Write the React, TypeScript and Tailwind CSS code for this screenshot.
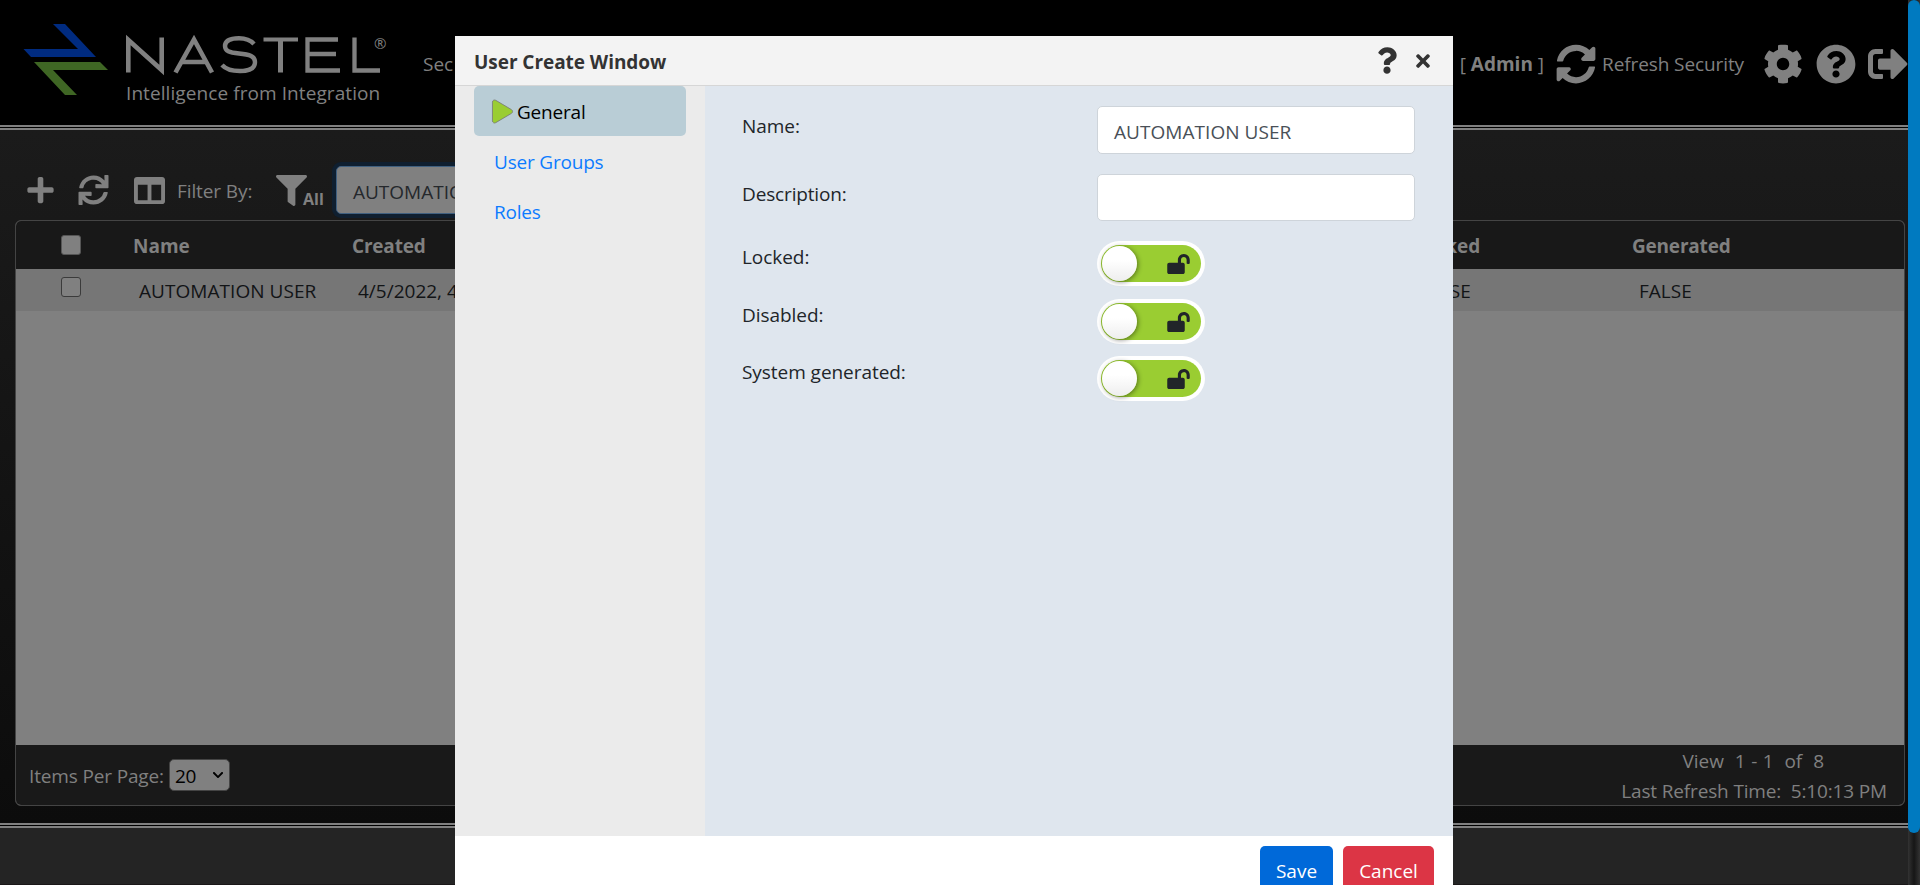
import React from "react";
import {
  FaPlus, FaSync, FaSyncAlt, FaColumns, FaFilter, FaCog, FaQuestionCircle,
  FaSignOutAlt, FaQuestion, FaTimes, FaPlay, FaLockOpen, FaChevronDown,
} from "react-icons/fa";

function Logo() {
  return (
    <svg className="block h-[80px] w-[380px]" viewBox="0 20 380 80">
      <path d="M53 24H65L96 57H31L23.500 49H78Z" fill="#002b80" />
      <path d="M34 62H100L108 70H53L77 95H65Z" fill="#3f6624" />
      <g fill="none" stroke="#808080">
        <path d="M128.300 72.500V40L161.700 70V37.500" strokeWidth="4.600" />
        <path d="M175.500 72.500L194 39.500L212 72.500M182 62H206" strokeWidth="4.600" />
        <path d="M254 44C250 39.500 245 38.200 239 38.200C230 38.200 225 41 225 46C225 51 229 52.500 239 53.500C250 54.500 255 56.500 255 62C255 68 250 71 240 71C231 71 226 69.500 222 65" strokeWidth="4.400" />
        <path d="M263.500 39.500H298" strokeWidth="4" />
        <path d="M280.500 39.500V72.500" strokeWidth="5" />
        <path d="M338 39.500H307.500V70.500H340M307.500 54H336" strokeWidth="4.300" />
        <path d="M354.500 37.500V70.500H380" strokeWidth="4.300" />
      </g>
    </svg>
  );
}

function Toggle() {
  return (
    <div className="flex h-[45px] w-[108px] rounded-full bg-white p-1">
      <div className="flex flex-1 items-center justify-between rounded-full bg-[#9acd32] pr-[11px]">
        <div className="ml-px h-[35px] w-[35px] rounded-full bg-linear-to-b from-white from-40% to-[#eeeeee] shadow-[1px_1px_5px_rgba(0,0,0,0.45)]" />
        <FaLockOpen className="h-5 w-[23px] text-[#212529]" />
      </div>
    </div>
  );
}

function Dialog() {
  return (
    <div className="absolute left-[455px] top-9 flex h-[849px] w-[998px] flex-col overflow-hidden bg-white">
      <div className="flex h-[50px] shrink-0 items-center justify-between border-b border-[#d6d6d6] bg-[#f3f3f3] pl-[19px] pr-[22px]">
        <h1 className="pt-[3px] text-[19px] font-bold tracking-[-0.05px] text-[#333]">User Create Window</h1>
        <div className="flex items-center gap-[18px] text-[#333]">
          <FaQuestion className="h-[27px] w-[20px]" />
          <FaTimes className="h-[20px] w-[16px]" />
        </div>
      </div>
      <div className="flex h-[750px] shrink-0">
        <nav className="w-[250px] bg-[#ebebeb] pl-[19px] tracking-[-0.2px] text-[#0d7bff]">
          <div className="flex h-[50px] w-[212px] items-center rounded-[5px] bg-[#b9cdd6] pl-[18px] text-black">
            <FaPlay className="mr-1 h-[23px] w-[21px] overflow-visible fill-[#9acd32] stroke-[#777] stroke-[18]" />
            <span className="pt-[2px]">General</span>
          </div>
          <div className="flex h-[50px] items-center pl-5 pt-[2px]">User Groups</div>
          <div className="flex h-[50px] items-center pl-5 pt-[2px]">Roles</div>
        </nav>
        <div className="flex-1 bg-[#dfe6ee] pl-[37px] pr-[38px] pt-5 tracking-[-0.05px] text-[#212529]">
          <div className="flex h-[68px] justify-between">
            <label className="pt-[5px]">Name:</label>
            <div className="flex h-12 w-[318px] items-center rounded-[5px] border border-[#ced4da] bg-white px-4 pt-1 tracking-[0.05px] text-[#495057]">AUTOMATION USER</div>
          </div>
          <div className="flex h-[67px] justify-between">
            <label className="pt-[5px] tracking-[-0.15px]">Description:</label>
            <div className="h-[47px] w-[318px] rounded-[5px] border border-[#ced4da] bg-white" />
          </div>
          {[["Locked:", "h-[58px]"], ["Disabled:", "h-[57px]"], ["System generated:", "h-[57px]"]].map(([t, h]) => (
            <div key={t} className={`flex ${h}`}>
              <label className="w-[355px] pt-px">{t}</label>
              <Toggle />
            </div>
          ))}
        </div>
      </div>
      <div className="flex justify-end gap-[10px] pr-[19px] pt-[10px] text-white">
        <div className="flex h-[50px] w-[73px] items-center justify-center rounded-[5px] bg-[#0069d9]">Save</div>
        <div className="flex h-[50px] w-[91px] items-center justify-center rounded-[5px] bg-[#dc3545]">Cancel</div>
      </div>
    </div>
  );
}

export default function App() {
  return (
    <div className="relative flex h-[885px] w-[1920px] overflow-hidden whitespace-nowrap bg-black font-['Open_Sans',sans-serif] text-[19px] leading-[30px] text-[#808080]">
      <div className="flex w-[1908px] flex-col">
        <header className="flex h-[125px] shrink-0 justify-between bg-black">
          <div className="flex">
            <div className="w-[423px] pt-5">
              <div className="relative">
                <Logo />
                <div className="absolute left-[374px] top-[14px] text-[15px] leading-[18px]">®</div>
                <div className="absolute left-[126px] top-[58px] text-[19px] leading-[30px] tracking-[0.08px]">Intelligence from Integration</div>
              </div>
            </div>
            <div className="pt-[49px]">Sec</div>
          </div>
          <div className="flex h-[127px] items-center">
            <span className="mr-3">[ <b>Admin</b> ]</span>
            <FaSyncAlt className="mr-[6px] h-10 w-10" />
            <span className="mr-[19px] tracking-[-0.1px]">Refresh Security</span>
            <FaCog className="mr-[13px] h-10 w-10" />
            <FaQuestionCircle className="mr-3 h-10 w-10" />
            <FaSignOutAlt className="h-10 w-10" />
          </div>
        </header>
        <div className="h-[5px] shrink-0 border-y-2 border-[#808080] bg-black" />
        <main className="h-[693px] shrink-0 bg-linear-to-b from-[#1b1b1b] to-[#0c0c0c] pl-[15px] pr-[3px]">
          <div className="flex h-[90px] items-center pl-3 pt-[30px]">
            <FaPlus className="mr-6 h-[30px] w-[27px]" />
            <FaSync className="mr-[25px] h-[30px] w-[31px]" />
            <FaColumns className="mr-3 h-[31px] w-[31px]" />
            <span className="w-[99px] pt-[2px] tracking-[-0.1px]">Filter By:</span>
            <FaFilter className="h-[31px] w-[31px]" />
            <b className="-ml-1 mt-[18px] w-[33px] text-[16px]">All</b>
            <div className="flex h-12 w-[318px] items-center rounded-[5px] border border-[#406080] bg-[#808080] px-4 pt-1 text-[#25282c] shadow-[0_0_0_4px_#0f1f30]">AUTOMATIO</div>
          </div>
          <section className="flex h-[586px] flex-col overflow-hidden rounded-[6px] border border-[#444] bg-[#808080]">
            <div className="flex h-12 items-center bg-[#181818] font-bold">
              <div className="w-[117px] pl-[45px]"><div className="h-5 w-5 rounded-[3px] border border-[#555] bg-[#808080]" /></div>
              <div className="w-[219px] pt-[2px]">Name</div>
              <div className="w-[1061px] pt-[2px] tracking-[-0.2px]">Created</div>
              <div className="w-[219px] pt-[2px]">Locked</div>
              <div className="pt-[2px] tracking-[-0.2px]">Generated</div>
            </div>
            <div className="flex h-[42px] items-center bg-[#767676] text-[#121416]">
              <div className="w-[123px] pb-[6px] pl-[45px]"><div className="h-5 w-5 rounded-[3px] border-[1.5px] border-[#3b3b3b] bg-[#808080]" /></div>
              <div className="w-[219px] pt-[2px] tracking-[0.05px]">AUTOMATION USER</div>
              <div className="w-[1060px] pt-[2px]">4/5/2022, 4</div>
              <div className="w-[221px] pt-[2px]">FALSE</div>
              <div className="pt-[2px]">FALSE</div>
            </div>
            <div className="flex-1" />
            <div className="flex h-[60px] justify-between bg-[#191919] pl-[13px] pr-[17px]">
              <div className="flex items-center">
                <span className="w-[140px] pt-[2px] tracking-[-0.15px]">Items Per Page:</span>
                <div className="flex h-8 w-[61px] items-center justify-between rounded-[5px] border border-[#444] bg-[#808080] px-[5px] text-black"><span className="pt-[2px] tracking-[-0.4px]">20</span><FaChevronDown className="h-3 w-3" /></div>
              </div>
              <div className="flex flex-col items-end pt-px">
                <div className="mr-[63px] whitespace-pre [word-spacing:0.5px]">View  1 - 1  of  8</div>
                <div className="whitespace-pre tracking-[-0.15px]">Last Refresh Time:  5:10:13 PM</div>
              </div>
            </div>
          </section>
        </main>
        <div className="h-[5px] shrink-0 border-y-2 border-[#808080] bg-black" />
        <footer className="flex-1 border-b border-[#1a1718] bg-[#242424]" />
      </div>
      <div className="w-3 bg-linear-to-r from-[#333] via-[#161616] to-[#333]">
        <div className="h-[833px] rounded-full bg-[#007ac0]" />
      </div>
      <Dialog />
    </div>
  );
}
